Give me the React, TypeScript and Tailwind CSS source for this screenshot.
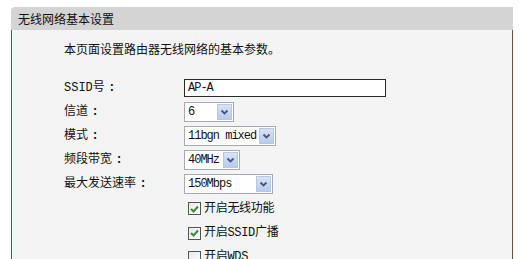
import React from "react";

const cjk = { fontFamily: '"Noto Sans CJK SC", "Noto Sans", sans-serif' };
const mono = { fontFamily: '"Liberation Mono", "Noto Sans CJK SC", monospace' };

function Arrow() {
  return (
    <div className="ml-auto mr-[1px] flex h-[16px] w-[15px] items-center justify-center border border-[#b5c7e6] bg-gradient-to-b from-[#d8e3f5] to-[#b9cbea]">
      <svg width="9" height="7" viewBox="0 0 9 7">
        <path d="M1.5 1.5 L4.5 4.5 L7.5 1.5" fill="none" stroke="#3f5687" strokeWidth="1.8" />
      </svg>
    </div>
  );
}

function Select({ value, w }: { value: string; w: string }) {
  return (
    <div className={`flex h-[20px] items-center border border-[#a4abb3] bg-white pl-[3px] ${w}`}>
      <span className="text-[12px] leading-none tracking-[-1px] text-[#111]" style={mono}>
        {value}
      </span>
      <Arrow />
    </div>
  );
}

function Check({ on, label }: { on: boolean; label: string }) {
  return (
    <div className="flex items-center pl-[4px]">
      <div className="flex h-[13px] w-[13px] items-center justify-center border border-[#4a5a4f] bg-gradient-to-br from-[#e8e8e4] to-white">
        {on && (
          <svg width="9" height="8" viewBox="0 0 9 8">
            <path d="M1 4 L3.5 6.5 L8 1.5" fill="none" stroke="#3d8a3d" strokeWidth="2" />
          </svg>
        )}
      </div>
      <span className="ml-[3px] text-[12px] leading-none tracking-[-0.3px] text-[#111]" style={mono}>
        {label}
      </span>
    </div>
  );
}

function Row({ label, children, h = "h-[24px]" }: { label?: string; children: React.ReactNode; h?: string }) {
  return (
    <div className={`flex items-center ${h}`}>
      <div className="flex w-[120px] items-center text-[12px] leading-none text-[#111]" style={mono}>
        {label && (
          <>
            <span>{label}</span>
            <span className="inline-block w-[14px] text-center font-bold">:</span>
          </>
        )}
      </div>
      <div className="flex items-center">{children}</div>
    </div>
  );
}

export default function App() {
  return (
    <div className="h-[259px] w-[525px] overflow-hidden bg-white" style={cjk}>
      <div className="ml-[11px] mt-[7px] w-[502px]">
        <div className="flex h-[23px] items-center rounded-tl-[4px] bg-[#d4d4d4] pl-[7px] text-[12px] text-[#111]">
          无线网络基本设置
        </div>
        <div className="h-[240px] border-x border-[#74493d] bg-[#f4f4f4] pl-[52px] pt-[11px]">
          <div className="h-[16px] text-[12px] leading-[16px] text-[#111]">本页面设置路由器无线网络的基本参数。</div>
          <div className="mt-[19px]">
            <Row label="SSID号">
              <div className="flex h-[18px] w-[202px] items-center border border-[#2a2a2a] bg-white pl-[3px]">
                <span className="text-[12px] leading-none tracking-[-1px] text-[#111]" style={mono}>
                  AP-A
                </span>
              </div>
            </Row>
            <Row label="信道">
              <Select value="6" w="w-[50px]" />
            </Row>
            <Row label="模式">
              <Select value="11bgn mixed" w="w-[92px]" />
            </Row>
            <Row label="频段带宽">
              <Select value="40MHz" w="w-[56px]" />
            </Row>
            <Row label="最大发送速率">
              <Select value="150Mbps" w="w-[89px]" />
            </Row>
            <Row h="h-[25px]">
              <Check on label="开启无线功能" />
            </Row>
            <Row>
              <Check on label="开启SSID广播" />
            </Row>
            <Row>
              <Check on={false} label="开启WDS" />
            </Row>
          </div>
        </div>
      </div>
    </div>
  );
}
